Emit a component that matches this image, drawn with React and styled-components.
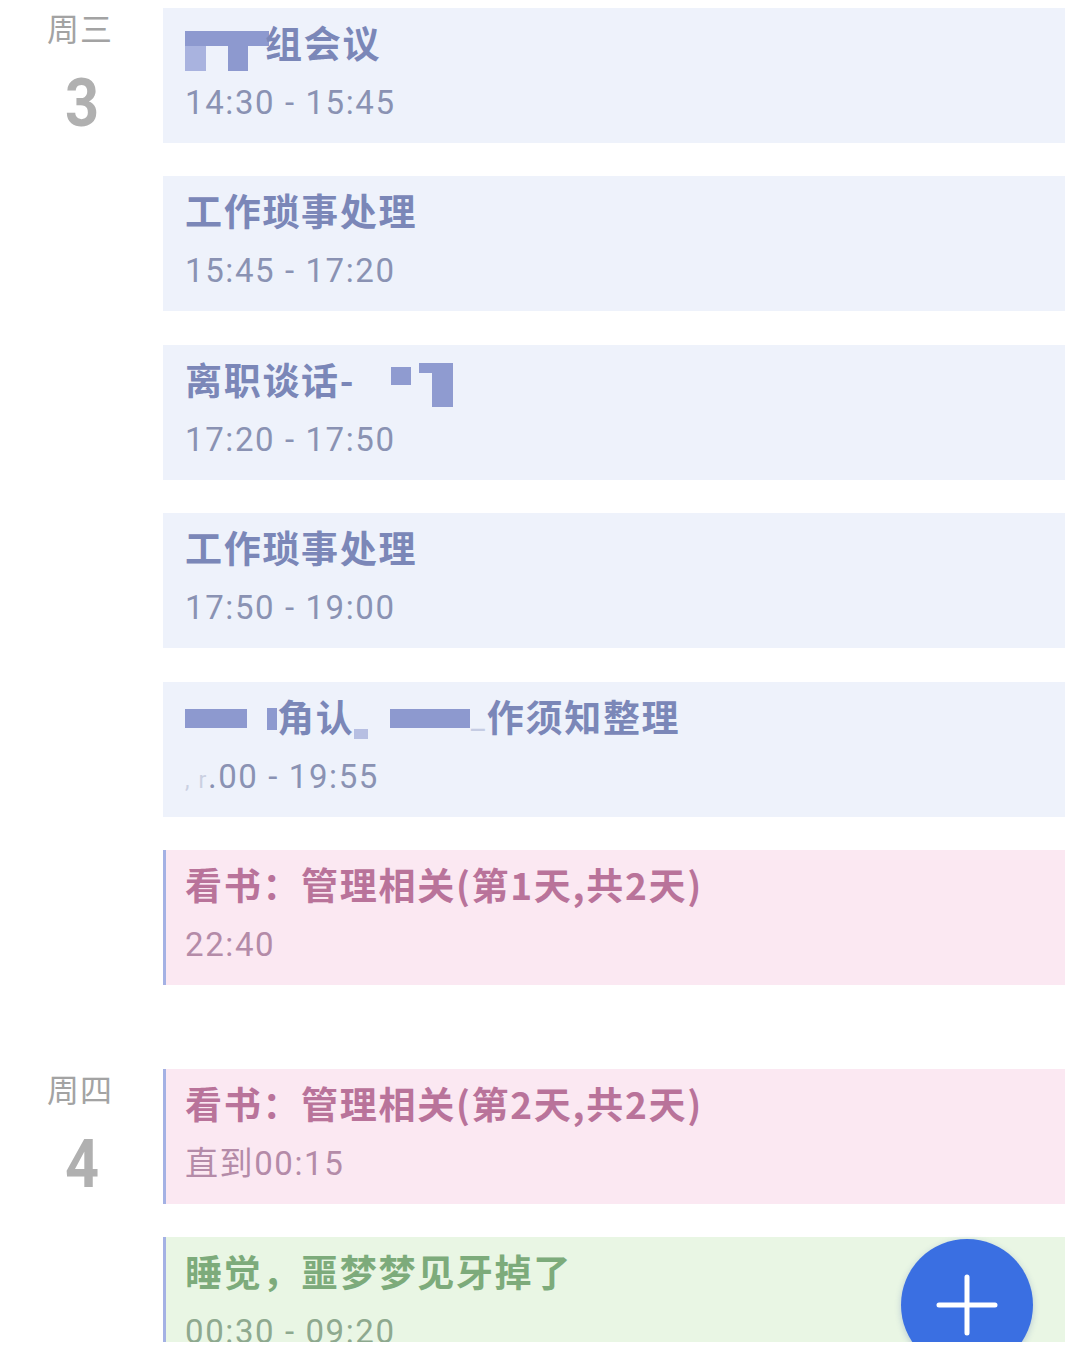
import React from "react";
import styled, { createGlobalStyle } from "styled-components";

const GlobalStyle = createGlobalStyle`
  html, body {
    margin: 0;
    padding: 0;
    background: #ffffff;
  }
  body {
    font-family: "Noto Sans CJK SC", "Noto Sans", sans-serif;
  }
`;

const tones = {
  blue: { bg: "#eef2fb", title: "#7b87b8", time: "#8a92b3", bar: "transparent" },
  pink: { bg: "#fbe8f2", title: "#b9739a", time: "#b48ba8", bar: "#a4b1e4" },
  green: { bg: "#e9f6e4", title: "#7dab7b", time: "#8ea98f", bar: "#a4b1e4" },
};

// built lazily so the styled parts below are defined by then
function getDays() {
  return [
    {
      weekday: "周三",
      num: "3",
      events: [
        { tone: "blue", title: <><RedactT />组会议</>, time: "14:30 - 15:45" },
        { tone: "blue", title: "工作琐事处理", time: "15:45 - 17:20" },
        { tone: "blue", title: <>离职谈话-<RedactName /></>, time: "17:20 - 17:50" },
        { tone: "blue", title: "工作琐事处理", time: "17:50 - 19:00" },
        {
          tone: "blue",
          title: (
            <>
              <Block $w={62} $h={19} />
              <Gap $w={20} />
              <Block $w={10} $h={22} />
              角认
              <Block $w={14} $h={10} $light />
              <Gap $w={22} />
              <Block $w={80} $h={19} />
              <Faint>_</Faint>作须知整理
            </>
          ),
          time: (
            <>
              <Faint>, r</Faint>.00 - 19:55
            </>
          ),
        },
        { tone: "pink", title: "看书：管理相关(第1天,共2天)", time: "22:40" },
      ],
    },
    {
      weekday: "周四",
      num: "4",
      events: [
        { tone: "pink", title: "看书：管理相关(第2天,共2天)", time: "直到00:15" },
        { tone: "green", title: "睡觉，噩梦梦见牙掉了", time: "00:30 - 09:20" },
      ],
    },
  ];
}

function RedactT() {
  return (
    <RedactSvg width="84" height="40" viewBox="0 0 84 40">
      <rect x="0" y="0" width="84" height="15" fill="#8d99cf" />
      <rect x="0" y="15" width="21" height="25" fill="#a9b3df" />
      <rect x="43" y="15" width="20" height="25" fill="#8d99cf" />
    </RedactSvg>
  );
}

function RedactName() {
  return (
    <NameSvg width="62" height="44" viewBox="0 0 62 44">
      <rect x="0" y="4" width="20" height="18" fill="#8f9bd0" />
      <rect x="28" y="0" width="34" height="10" fill="#8f9bd0" />
      <rect x="41" y="10" width="21" height="34" fill="#8f9bd0" />
    </NameSvg>
  );
}

function PlusIcon() {
  return (
    <svg width="62" height="62" viewBox="0 0 62 62">
      <path d="M31 3 V59 M3 31 H59" stroke="#ffffff" strokeWidth="5" strokeLinecap="round" />
    </svg>
  );
}

export default function App() {
  const days = getDays();
  return (
    <>
      <GlobalStyle />
      <Viewport>
        {days.map((day, i) => (
          <DaySection key={day.num} $first={i === 0}>
            <DayLabel>
              <Weekday>{day.weekday}</Weekday>
              <DayNum>{day.num}</DayNum>
            </DayLabel>
            <CardList>
              {day.events.map((ev, j) => (
                <Card key={j} $tone={ev.tone}>
                  <Title $tone={ev.tone}>{ev.title}</Title>
                  <Time $tone={ev.tone}>{ev.time}</Time>
                </Card>
              ))}
            </CardList>
          </DaySection>
        ))}
        <Fab>
          <PlusIcon />
        </Fab>
      </Viewport>
    </>
  );
}

const Viewport = styled.div`
  position: relative;
  height: 1342px;
  overflow: hidden;
  padding-top: 8px;
  box-sizing: border-box;
  background: #ffffff;
`;

const DaySection = styled.section`
  display: grid;
  grid-template-columns: 163px 1fr;
  padding-right: 15px;
  margin-top: ${(p) => (p.$first ? "0" : "84px")};
`;

const DayLabel = styled.div`
  display: flex;
  flex-direction: column;
  align-items: center;
  padding-top: 0;
`;

const Weekday = styled.div`
  font-family: "Noto Sans CJK SC", sans-serif;
  font-size: 32px;
  line-height: 38px;
  color: #a3a3a3;
  letter-spacing: 1px;
  margin-left: -3px;
`;

const DayNum = styled.div`
  font-family: "Roboto", "Liberation Sans", sans-serif;
  font-weight: 700;
  font-size: 66px;
  line-height: 80px;
  color: #b0b0b0;
  margin-top: 18px;
  transform: scaleX(0.9);
`;

const CardList = styled.div`
  display: flex;
  flex-direction: column;
  gap: 33.4px;
`;

const Card = styled.div`
  height: 135px;
  box-sizing: border-box;
  background: ${(p) => tones[p.$tone].bg};
  border-left: 3px solid ${(p) => tones[p.$tone].bar};
  padding: 11px 20px 0 19px;
  display: flex;
  flex-direction: column;
`;

const Title = styled.div`
  display: flex;
  align-items: center;
  height: 46px;
  font-family: "Noto Sans CJK SC", sans-serif;
  font-weight: 700;
  font-size: 37px;
  letter-spacing: 1.7px;
  color: ${(p) => tones[p.$tone].title};
  white-space: nowrap;
`;

const Time = styled.div`
  margin-top: 17px;
  font-family: "Roboto", "Noto Sans CJK SC", sans-serif;
  font-size: 33px;
  line-height: 42px;
  letter-spacing: 1.6px;
  color: ${(p) => tones[p.$tone].time};
  white-space: nowrap;
`;

const RedactSvg = styled.svg`
  align-self: flex-end;
  margin-bottom: -6px;
  margin-right: -4px;
`;

const NameSvg = styled.svg`
  margin-left: 36px;
  margin-top: 12px;
`;

const Block = styled.span`
  display: inline-block;
  width: ${(p) => p.$w}px;
  height: ${(p) => p.$h}px;
  background: ${(p) => (p.$light ? "#b7bfe2" : "#8d99cf")};
  align-self: ${(p) => (p.$light ? "flex-end" : "center")};
  margin-top: ${(p) => (p.$light ? "0" : "6px")};
`;

const Gap = styled.span`
  display: inline-block;
  width: ${(p) => p.$w}px;
`;

const Faint = styled.span`
  opacity: 0.35;
  font-size: 0.7em;
`;

const Fab = styled.button`
  position: absolute;
  left: 901px;
  top: 1239px;
  width: 132px;
  height: 132px;
  border-radius: 50%;
  border: none;
  background: #3a6fe2;
  display: flex;
  align-items: center;
  justify-content: center;
  padding: 0;
  box-shadow: 0 2px 6px rgba(40, 70, 160, 0.25);
`;
